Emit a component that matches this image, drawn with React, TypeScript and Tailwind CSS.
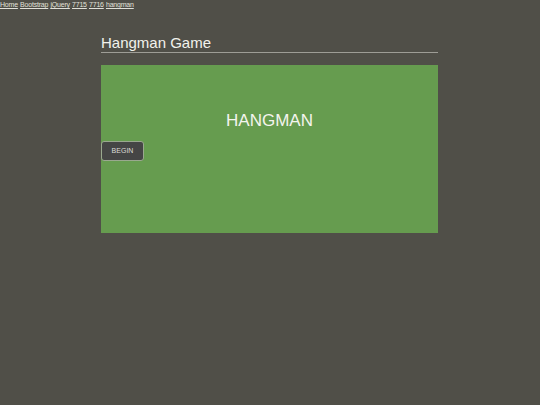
import React from "react";

const links = ["Home", "Bootstrap", "jQuery", "7715", "7716", "hangman"];

export default function App() {
  return (
    <div
      className="min-h-[405px] bg-[#504f48] text-[#e8e8e0]"
      style={{ fontFamily: '"Liberation Sans", Arial, sans-serif' }}
    >
      <nav className="flex gap-[2.2px] text-[7px] leading-[9px] tracking-[-0.2px]">
        {links.map((l) => (
          <a key={l} href="#" className="underline text-[#e0e0d8]">
            {l}
          </a>
        ))}
      </nav>

      <div className="w-[337px] ml-[101px] mt-[24px]">
        <h1 className="text-[15px] leading-[16px] pt-[2px] pb-[1px] text-[#f2f2ec] border-b border-[#9e9d96]">
          Hangman Game
        </h1>

        <div className="mt-[12px] h-[168px] bg-[#669c4f] flex flex-col">
          <div className="mt-[46px] text-center text-[17px] leading-[20px] text-[#f4f4ee]">
            HANGMAN
          </div>
          <button className="mt-[10px] w-[43px] h-[20px] bg-[#454545] border border-[#9aa88f] rounded-[3px] text-[7px] text-[#dcdcd6]">
            BEGIN
          </button>
        </div>
      </div>
    </div>
  );
}
